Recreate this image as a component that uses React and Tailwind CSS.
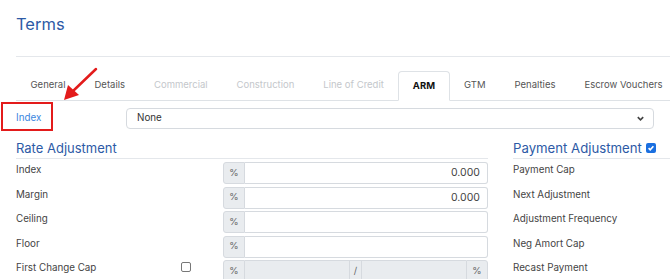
import React from 'react';

const tabs = [
  { label: 'General', state: 'normal' },
  { label: 'Details', state: 'normal' },
  { label: 'Commercial', state: 'disabled' },
  { label: 'Construction', state: 'disabled' },
  { label: 'Line of Credit', state: 'disabled' },
  { label: 'ARM', state: 'active' },
  { label: 'GTM', state: 'normal' },
  { label: 'Penalties', state: 'normal' },
  { label: 'Escrow Vouchers', state: 'normal' },
];

const rateRows = [
  { label: 'Index', value: '0.000' },
  { label: 'Margin', value: '0.000' },
  { label: 'Ceiling', value: '' },
  { label: 'Floor', value: '' },
];

const paymentRows = ['Payment Cap', 'Next Adjustment', 'Adjustment Frequency', 'Neg Amort Cap', 'Recast Payment'];

const PercentInput = ({ value }) => (
  <div className="flex h-[22px] w-[265px]">
    <span className="flex w-[22px] items-center justify-center rounded-l-[3px] border border-[#d6dadf] bg-[#e9ecef] text-[9.5px] text-[#666]">%</span>
    <div className="flex flex-1 items-center justify-end rounded-r-[3px] border border-l-0 border-[#d6dadf] bg-white pr-[7px] text-[10.5px] text-[#444]">
      {value}
    </div>
  </div>
);

export default function App() {
  return (
    <div
      className="relative h-[279px] w-[670px] overflow-hidden bg-white"
      style={{ fontFamily: 'Inter, "Liberation Sans", sans-serif' }}
    >
      {/* Header */}
      <div className="ml-4 h-[57px] border-b border-[#e4e7eb] pt-[12px]">
        <h1 className="text-[16.5px] leading-[24px] text-[#2d5aa6]">Terms</h1>
      </div>

      {/* Tabs */}
      <div className="ml-4 mt-[14px] flex h-[30px] border-b border-[#dee2e6] whitespace-nowrap">
        {tabs.map((t) => (
          <div
            key={t.label}
            className={
              t.state === 'active'
                ? '-mb-px flex h-[30px] items-center rounded-t-[4px] border border-b-white border-[#dee2e6] bg-white px-[13.5px] text-[9.5px] font-bold text-[#111]'
                : t.state === 'disabled'
                ? 'flex h-[29px] items-center px-[14.5px] text-[9.5px] text-[#c4c7cb]'
                : 'flex h-[29px] items-center px-[14.5px] text-[9.5px] text-[#555]'
            }
          >
            {t.label}
          </div>
        ))}
      </div>

      {/* Index select row */}
      <div className="mt-[7px] flex items-center pl-4 pr-4">
        <span className="w-[110px] text-[9.8px] text-[#3b86e0]">Index</span>
        <div className="flex h-[21px] flex-1 items-center justify-between rounded-[4px] border border-[#d6dadf] pl-[10px] pr-[8px] text-[9.8px] text-[#333]">
          <span>None</span>
          <svg width="9" height="9" viewBox="0 0 10 10" fill="none" stroke="#444" strokeWidth="1.8">
            <path d="M2 3.5l3 3 3-3" />
          </svg>
        </div>
      </div>

      {/* Adjustment sections */}
      <div className="mt-[9px] flex pl-4">
        <div className="w-[472px]">
          <h2 className="h-[21px] border-b border-[#e4e7eb] pt-[2px] text-[13px] leading-[17px] text-[#2d5aa6]">Rate Adjustment</h2>
          <div className="mt-[3px] flex flex-col gap-[2.5px]">
            {rateRows.map((r) => (
              <div key={r.label} className="flex items-start">
                <span className="w-[207px] pt-[1px] text-[9.8px] leading-[14px] text-[#444]">{r.label}</span>
                <PercentInput value={r.value} />
              </div>
            ))}
            <div className="flex items-start">
              <span className="w-[165px] pt-[1px] text-[9.8px] leading-[14px] text-[#444]">First Change Cap</span>
              <span className="mt-[2px] h-[10px] w-[10px] rounded-[2px] border border-[#777] bg-white" />
              <div className="ml-[32px] flex h-[22px] w-[265px] text-[9.5px] text-[#666]">
                <span className="flex w-[22px] items-center justify-center rounded-l-[3px] border border-[#d6dadf] bg-[#e9ecef]">%</span>
                <span className="flex-1 border-y border-[#d6dadf] bg-[#e9ecef]" />
                <span className="flex w-[13px] items-center justify-center border border-[#d6dadf] bg-[#e9ecef]">/</span>
                <span className="flex-1 border-y border-[#d6dadf] bg-[#e9ecef]" />
                <span className="flex w-[22px] items-center justify-center rounded-r-[3px] border border-[#d6dadf] bg-[#e9ecef]">%</span>
              </div>
            </div>
          </div>
        </div>

        <div className="ml-[25px] flex-1">
          <h2 className="flex h-[21px] items-start gap-[4px] border-b border-[#e4e7eb] pt-[2px] text-[13.2px] leading-[17px] text-[#2d5aa6]">
            Payment Adjustment
            <span className="mt-[3px] flex h-[10px] w-[10px] items-center justify-center rounded-[2px] bg-[#1a6fe0]">
              <svg width="8" height="8" viewBox="0 0 10 10" fill="none" stroke="white" strokeWidth="2">
                <path d="M2 5.2l2 2 4-4.5" />
              </svg>
            </span>
          </h2>
          <div className="mt-[3px] flex flex-col gap-[2.5px]">
            {paymentRows.map((p) => (
              <div key={p} className="h-[22px] pt-[1px] text-[9.8px] leading-[14px] text-[#444]">{p}</div>
            ))}
          </div>
        </div>
      </div>

      {/* Annotation overlay */}
      <div className="absolute left-[1px] top-[102px] h-[29px] w-[52px] border-2 border-[#e31b1b]" />
      <svg className="absolute left-[58px] top-[66px]" width="42" height="38" viewBox="0 0 42 38">
        <line x1="38" y1="3" x2="14" y2="26" stroke="#e31b1b" strokeWidth="2.5" strokeLinecap="round" />
        <polygon points="6,34 10,19 21,29" fill="#e31b1b" />
      </svg>
    </div>
  );
}
